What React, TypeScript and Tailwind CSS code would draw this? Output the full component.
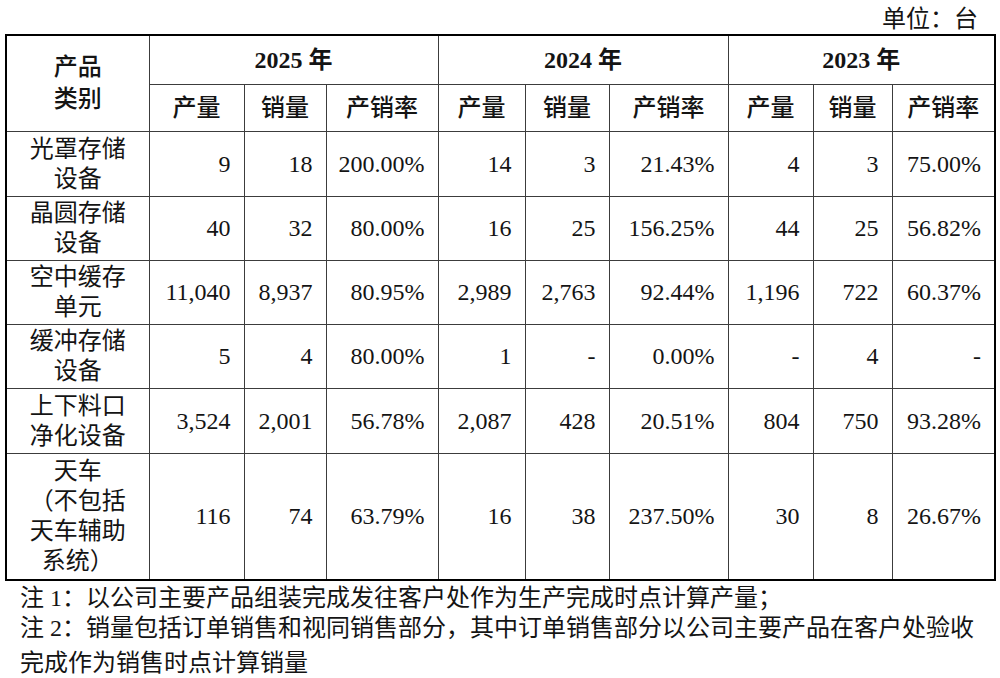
import React from "react";

type Row = { name: React.ReactNode[]; v: string[] };

const rows: Row[] = [
  { name: ["光罩存储", "设备"], v: ["9", "18", "200.00%", "14", "3", "21.43%", "4", "3", "75.00%"] },
  { name: ["晶圆存储", "设备"], v: ["40", "32", "80.00%", "16", "25", "156.25%", "44", "25", "56.82%"] },
  { name: ["空中缓存", "单元"], v: ["11,040", "8,937", "80.95%", "2,989", "2,763", "92.44%", "1,196", "722", "60.37%"] },
  { name: ["缓冲存储", "设备"], v: ["5", "4", "80.00%", "1", "-", "0.00%", "-", "4", "-"] },
  { name: ["上下料口", "净化设备"], v: ["3,524", "2,001", "56.78%", "2,087", "428", "20.51%", "804", "750", "93.28%"] },
  {
    name: [
      "天车",
      <>
        <span className="inline-block w-[24px] text-right">（</span>不包括
      </>,
      "天车辅助",
      <>
        系统<span className="inline-block w-[24px] text-left">）</span>
      </>,
    ],
    v: ["116", "74", "63.79%", "16", "38", "237.50%", "30", "8", "26.67%"],
  },
];

const heights = ["h-[65px]", "h-[64px]", "h-[64px]", "h-[64px]", "h-[65px]", "h-[127px]"];
const widths = [143, 95, 82, 112, 87, 84, 119, 85, 79, 103];

const cell = "border border-[#3c3c3c] p-0";

export default function App() {
  return (
    <div className="w-[1000px] h-[678px] bg-white text-[#141414] font-['Liberation_Serif','Noto_Sans_CJK_SC',serif] text-[24px] overflow-hidden">
      <div className="h-[34px] flex items-center justify-end pr-[22px] leading-[24px] pt-[4px]">单位：台</div>
      <div className="pl-[5px]">
        <table className="table-fixed border-collapse border-2 border-black w-[989px]">
          <colgroup>
            {widths.map((w, i) => (
              <col key={i} style={{ width: w }} />
            ))}
          </colgroup>
          <thead>
            <tr className="h-[49px]">
              <th rowSpan={2} className={`${cell} border-l-2 border-l-black font-medium leading-[32px] text-center align-middle`}>
                <div>产品</div>
                <div>类别</div>
              </th>
              <th colSpan={3} className={`${cell} font-bold text-center`}>2025 年</th>
              <th colSpan={3} className={`${cell} font-bold text-center`}>2024 年</th>
              <th colSpan={3} className={`${cell} font-bold text-center`}>2023 年</th>
            </tr>
            <tr className="h-[47px]">
              {[0, 1, 2].flatMap((g) =>
                ["产量", "销量", "产销率"].map((t) => (
                  <th key={`${g}-${t}`} className={`${cell} font-medium text-center`}>
                    {t}
                  </th>
                ))
              )}
            </tr>
          </thead>
          <tbody>
            {rows.map((r, i) => (
              <tr key={i} className={heights[i]}>
                <td className={`${cell} text-center leading-[30px] align-middle`}>
                  {r.name.map((n, j) => (
                    <div key={j}>{n}</div>
                  ))}
                </td>
                {r.v.map((v, j) => (
                  <td key={j} className={`${cell} text-right pr-[13px] align-middle leading-[30px]`}>
                    {v}
                  </td>
                ))}
              </tr>
            ))}
          </tbody>
        </table>
      </div>
      <div className="pl-[20px] pt-[2px] leading-[30px]">
        <div className="whitespace-nowrap">注 1：以公司主要产品组装完成发往客户处作为生产完成时点计算产量；</div>
        <div className="whitespace-nowrap">注 2：销量包括订单销售和视同销售部分，其中订单销售部分以公司主要产品在客户处验收</div>
        <div className="whitespace-nowrap mt-[5px]">完成作为销售时点计算销量</div>
      </div>
    </div>
  );
}
